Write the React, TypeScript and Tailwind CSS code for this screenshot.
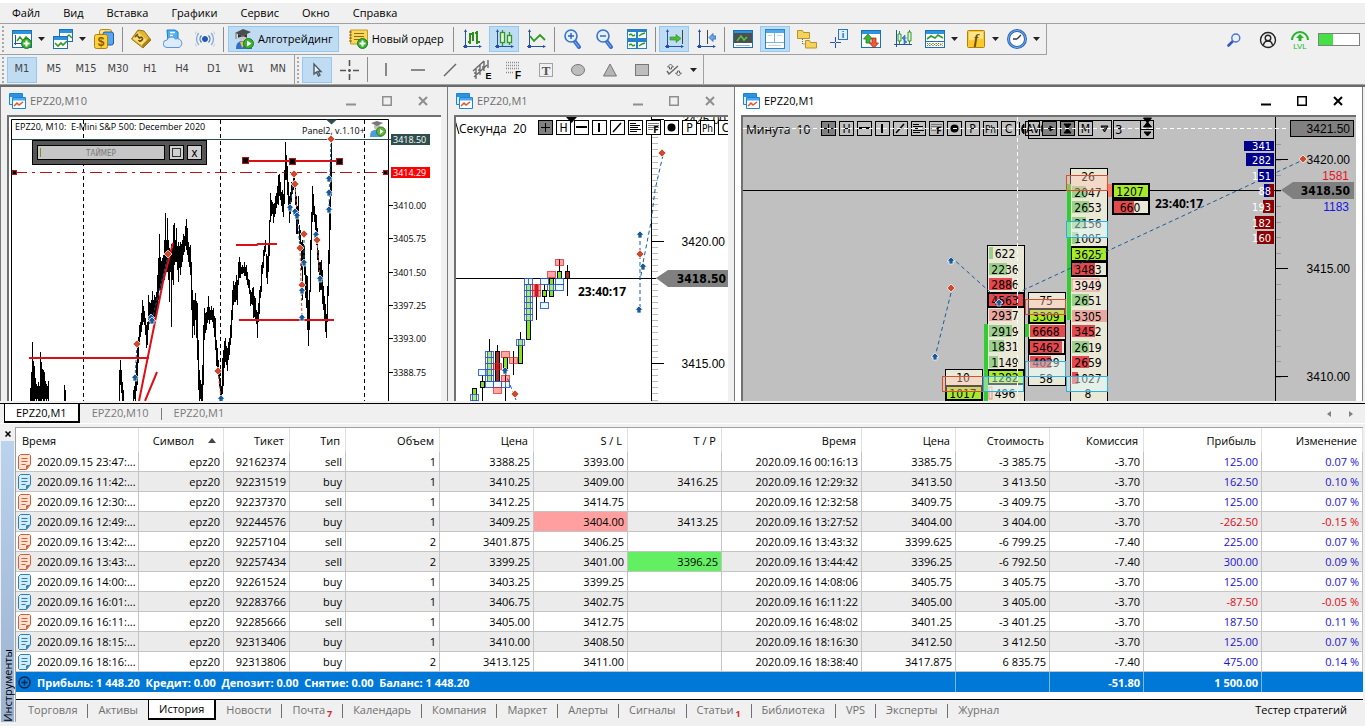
/**
 * @module App
 * Trading terminal workspace: menu, toolbars, three chart windows and the
 * toolbox with the account history table.
 */
import React from 'react';
import clsx from 'clsx';

const SANS = '"Open Sans", "Noto Sans", sans-serif';
const TAHOMA = '"DejaVu Sans Condensed", "DejaVu Sans", sans-serif';
const ARIAL = '"Liberation Sans", Arial, sans-serif';

/* ------------------------------------------------------------------ */
/* Toolbar icons                                                       */
/* ------------------------------------------------------------------ */

const AXES = (
  <g stroke="#2352a8" fill="#2352a8">
    <path d="M3.5 1v17M1 17.5h18" fill="none" />
    <path d="M3.5 0l1.5 3h-3zM20 17.5l-3-1.5v3zM2 16h3v3h-3z" stroke="none" />
  </g>
);

const WINDOW = (
  <>
    <rect x="0.5" y="1.5" width="19" height="17" fill="#fff" stroke="#1c6fb5" />
    <rect x="1" y="2" width="18" height="3" fill="#2b93e0" />
  </>
);

const PLUS_BADGE = (
  <>
    <circle cx="14.5" cy="14.5" r="5" fill="#37b22c" stroke="#1f7d1c" />
    <path d="M14.5 11.5v6M11.5 14.5h6" stroke="#fff" strokeWidth="2" />
  </>
);

const LENS_HANDLE = (
  <>
    <path d="M11.5 12l4.5 6" stroke="#3c6fd0" strokeWidth="4" strokeLinecap="round" />
    <path d="M12 13l4 5" stroke="#8fb4f2" strokeWidth="1" />
    <circle cx="8" cy="7" r="6" fill="#e2f1fd" stroke="#3a76c8" strokeWidth="1.6" />
  </>
);

const ICONS: Record<string, React.ReactNode> = {
  newChart: (
    <>
      {WINDOW}
      <path d="M3.5 6v10M2 14.5h15" stroke="#2352a8" />
      <path d="M5 12l3-4 3 4 3-4 4 4" fill="none" stroke="#2e9a24" strokeWidth="1.6" />
      {PLUS_BADGE}
    </>
  ),
  charts: (
    <>
      <rect x="6.5" y="0.5" width="13" height="12" fill="#fff" stroke="#1c6fb5" />
      <rect x="7" y="1" width="12" height="3" fill="#2b93e0" />
      <path d="M13 9l3-3 3 3" fill="none" stroke="#2e9a24" strokeWidth="1.4" />
      <rect x="0.5" y="7.5" width="14" height="12" fill="#fff" stroke="#1c6fb5" />
      <rect x="1" y="8" width="13" height="3" fill="#2b93e0" />
      <path d="M2 14l3 3 3-3 2 2 4-4" fill="none" stroke="#2e9a24" strokeWidth="1.6" />
    </>
  ),
  symbols: (
    <>
      <rect x="5.5" y="0.5" width="12" height="14" rx="2" fill="#ffe27a" stroke="#b8860b" />
      <rect x="9" y="3" width="10.5" height="13" rx="2" fill="#5aa5ee" stroke="#1b5fae" />
      <rect x="0.5" y="5.5" width="13" height="14" rx="2" fill="#ffd23c" stroke="#b07f0c" />
      <text x="7" y="17" fontSize="12" fontWeight="700" textAnchor="middle" fill="#8a5b00" fontFamily={ARIAL}>$</text>
    </>
  ),
  market: (
    <>
      <path d="M0.5 10L7 1l6 1 7 9-8 8z" fill="#e3b733" stroke="#94710f" />
      <path d="M2 10l5-7 10 9-5 5z" fill="#f7dc7a" />
      <path d="M20 11l-8 8-1-3 7-7z" fill="#a8801a" />
      <path d="M7 5l-3 3M6.500 7l2 2c1.500-2 4 0 2.500 2s-3 1-3.500 0" fill="none" stroke="#6b4c06" strokeWidth="1.6" />
    </>
  ),
  cloud: (
    <>
      <path d="M4 1h8l3 2v10H5z" fill="#4fb2ef" stroke="#1c7cc4" />
      <path d="M7 3.5h5M7 6.5h3" stroke="#fff" strokeWidth="1.4" />
      <path d="M4 18.5a3.7 3.7 0 010-7.500a5 5 0 018.500-1a4.300 4.300 0 013.500 8.500z" fill="#dcebff" stroke="#5b93e0" />
    </>
  ),
  signal: (
    <g fill="none" stroke="#4a82cf">
      <circle cx="10" cy="10" r="2.500" fill="#1f56b8" stroke="#1f56b8" />
      <path d="M6.500 6.500a5 5 0 000 7M13.500 6.500a5 5 0 010 7" strokeWidth="1.400" />
      <path d="M3.800 4a9 9 0 000 12M16.200 4a9 9 0 010 12" stroke="#7ba7de" strokeWidth="1.300" />
      <path d="M1.500 2.500a12 12 0 000 15M18.500 2.500a12 12 0 010 15" stroke="#b1cbec" />
    </g>
  ),
  algo: (
    <>
      <path d="M2 20c0-7 3-8 8-8s8 1 8 8z" fill="#2f6fd0" />
      <path d="M6 13l2 6 4-6z" fill="#f1b63a" />
      <circle cx="9" cy="8.500" r="4" fill="#c9c9c9" />
      <path d="M1 4l8-4 8 3-8 4z" fill="#4d4d4d" />
      <path d="M4 5v4c3-2 7-2 9 0V5L9 7z" fill="#333" />
      <path d="M2 4v6" stroke="#777" />
      <circle cx="14.500" cy="14.500" r="5" fill="#37b22c" stroke="#1f7d1c" />
      <path d="M13 11.500v6l4.500-3z" fill="#fff" />
    </>
  ),
  order: (
    <>
      <path d="M2.500 1h17v14h-17z" fill="#f9d75c" stroke="#c49a1c" />
      <path d="M1 3h3M1 6h3M1 9h3M1 12h3" stroke="#7b5f11" />
      <path d="M6 4.500h10M6 7.500h10M6 10.500h6" stroke="#8a6a14" />
      {PLUS_BADGE}
    </>
  ),
  bars: (
    <>
      {AXES}
      <path d="M8 4v11M6 13h2M8 5h3M11 3v9M15 2v13M13 4h2M15 13h3" fill="none" stroke="#2e8f1e" strokeWidth="2" />
    </>
  ),
  candles: (
    <>
      {AXES}
      <g fill="#e7fbe0" stroke="#2e9a24" strokeWidth="1.300">
        <path d="M8.500 1v16M15.500 3v13" />
        <rect x="6.500" y="3.500" width="4" height="10" />
        <rect x="13.500" y="6.500" width="4" height="7" />
      </g>
    </>
  ),
  line: (
    <>
      {AXES}
      <path d="M4 7l4 5 6-6 5 5" fill="none" stroke="#2e9a24" strokeWidth="1.800" />
    </>
  ),
  zoomIn: (
    <>
      {LENS_HANDLE}
      <path d="M8 4v6M5 7h6" stroke="#2a62b8" strokeWidth="1.400" />
    </>
  ),
  zoomOut: (
    <>
      {LENS_HANDLE}
      <path d="M5 7h6" stroke="#2a62b8" strokeWidth="1.400" />
    </>
  ),
  tile: (
    <>
      <rect x="0" y="0" width="20" height="20" fill="#2a7fc9" />
      <path d="M1 3h8v6H1zM11 3h8v6h-8zM1 13h8v6H1zM11 13h8v6h-8z" fill="#f2fbff" />
      <path d="M2 6l2-1 2 2 2-1M12 7l3-2 3-1M2 16l2-1 2 2 2-1M12 17l3-2 3-1" fill="none" stroke="#2e9a24" strokeWidth="1.400" />
    </>
  ),
  autoScroll: (
    <>
      {AXES}
      <path d="M18.500 1v14" stroke="#444" />
      <path d="M6 8h6V5.500l5 4-5 4V11H6z" fill="#4cbb3d" stroke="#2b8a20" strokeWidth="0.600" />
    </>
  ),
  shift: (
    <>
      {AXES}
      <path d="M11.500 1v14" stroke="#444" />
      <path d="M20 7h-3V4.500L13 8.500l4 4V10h3z" fill="#6ba7ea" stroke="#2a66b8" strokeWidth="0.800" />
    </>
  ),
  marketWatch: (
    <>
      {WINDOW}
      <rect x="1" y="4" width="18" height="10" fill="#4b5052" />
      <path d="M4 12l4-5 3 4 3-3" fill="none" stroke="#57c63c" strokeWidth="1.600" />
      <path d="M3 16.500h14" stroke="#9fb4c4" />
    </>
  ),
  navigator: (
    <>
      <rect x="0.500" y="0.500" width="19" height="19" fill="#fff" stroke="#2b86d0" />
      <rect x="1" y="1" width="18" height="3" fill="#51a9ea" />
      <path d="M9.500 4v9M1 13.500h18" stroke="#7fb7e4" />
      <path d="M3 6.500h4M12 6.500h5M3 16.500h13" stroke="#c4d4e2" />
    </>
  ),
  folders: (
    <>
      <path d="M0.500 1.500h5l1 2h6v6h-12z" fill="#f4d35c" stroke="#b8922a" />
      <path d="M8.500 11.500h4l1 2h6v5.500h-11z" fill="#f4d35c" stroke="#b8922a" />
      <path d="M5.500 10v5h3" fill="none" stroke="#666" strokeDasharray="1 1" />
    </>
  ),
  dataWindow: (
    <>
      <rect x="9.500" y="0.500" width="9" height="10" fill="#dff0ff" stroke="#2b76c4" />
      <text x="14" y="9" fontSize="9" fontWeight="700" textAnchor="middle" fill="#1d5fae" fontFamily={ARIAL}>i</text>
      <path d="M1 13.500h12M6.500 8v11" stroke="#2352a8" strokeDasharray="5 1" />
    </>
  ),
  trade: (
    <>
      {WINDOW}
      <path d="M7 5l4.500 5H9v4H5v-4H2.500z" fill="#3fb533" stroke="#1f7d1c" strokeWidth="0.800" />
      <path d="M13 19l-4.500-5H11V9h4v5h2.500z" fill="#ef5b3a" stroke="#ad2e15" strokeWidth="0.800" />
    </>
  ),
  depth: (
    <>
      <path d="M3.500 1v17M1 15.500h18" stroke="#2352a8" />
      <path d="M6.500 2v13M16.500 1v14" stroke="#2e9a24" />
      <path d="M5 5h3v7H5zM15 3h3v9h-3z" fill="#dff8d6" stroke="#2e9a24" />
      <path d="M9 9l3-3v6zM14 9h-2M14 13l-3-2v4z" fill="#3a82dc" stroke="#2a66b8" strokeWidth="0.600" />
    </>
  ),
  indicators: (
    <>
      {WINDOW}
      <path d="M1 12.500h18" stroke="#1c6fb5" />
      <path d="M2 10l4-3 4 2 3-3 5 3" fill="none" stroke="#2e9a24" strokeWidth="1.600" />
      <path d="M2 17l3-3 3 3 3-3 3 3 4-3" fill="none" stroke="#d24a3a" strokeDasharray="2 1" />
      <path d="M2 14l3 3 3-3 3 3 3-3 4 3" fill="none" stroke="#2e9a24" strokeDasharray="2 1" />
    </>
  ),
  func: (
    <>
      <rect x="1.500" y="1.500" width="17" height="17" rx="1" fill="#fbc92e" stroke="#b0820c" />
      <path d="M3 3h14v7c-5-2-9 2-14 1z" fill="#ffe48a" />
      <text x="10" y="15" fontSize="14" fontStyle="italic" fontWeight="700" textAnchor="middle" fill="#6b4a00" fontFamily='"Liberation Serif", serif'>f</text>
    </>
  ),
  clock: (
    <>
      <circle cx="10" cy="10" r="8.500" fill="#fff" stroke="#2a66b8" strokeWidth="3" />
      <circle cx="10" cy="10" r="8.500" fill="none" stroke="#7cb0ee" />
      <path d="M10 10l4-4M10 10H6" stroke="#333" strokeWidth="1.300" />
    </>
  ),
  cursor: <path d="M7 4v10l2.500-2 2 4 1.500-1-2-3.500h3z" fill="#f2f2f2" stroke="#4a5a68" strokeWidth="1.400" />,
  crosshair: <path d="M10.500 0v6M10.500 14v6M1 10.500h6M14 10.500h6M10.500 9v3M9 10.500h3" stroke="#555" strokeWidth="1.600" />,
  vline: <path d="M10 3v13" stroke="#666" strokeWidth="1.500" />,
  hline: <path d="M3 10h14" stroke="#666" strokeWidth="1.500" />,
  trend: <path d="M4 16L16 4" stroke="#666" strokeWidth="1.500" />,
  channel: (
    <>
      <path d="M2 17L15 5M1 11L12 1M4 19V8M8 15V5M12 11V1M16 8V0M2 13h2M6 10h2M10 7h2" stroke="#6a6a6a" strokeWidth="1.400" />
      <text x="16.500" y="19" fontSize="9" fontWeight="700" textAnchor="middle" fontFamily={ARIAL}>E</text>
    </>
  ),
  fibo: (
    <>
      <path d="M2 2.500h14M2 5.500h14M2 8.500h14M2 12.500h8" stroke="#8a8a8a" strokeDasharray="1 1" strokeWidth="1.500" />
      <text x="14" y="19" fontSize="10" fontWeight="700" textAnchor="middle" fontFamily={ARIAL}>F</text>
    </>
  ),
  text: (
    <>
      <rect x="3.500" y="3.500" width="13" height="13" fill="none" stroke="#555" strokeDasharray="1 1" />
      <text x="10" y="15" fontSize="13" fontWeight="700" textAnchor="middle" fill="#555" fontFamily='"Liberation Serif", serif'>T</text>
    </>
  ),
  ellipse: <ellipse cx="10" cy="10" rx="6.500" ry="5.500" fill="#bdbdbd" stroke="#777" />,
  triangle: <path d="M10 4l6.500 12h-13z" fill="#b5b5b5" stroke="#777" />,
  rect: <rect x="3.500" y="4.500" width="13" height="11" fill="#bdbdbd" stroke="#777" />,
  arrows: (
    <g fill="none" stroke="#666">
      <path d="M5.500 9V7H3.500l3-3 3 3H7.500v2zM13.500 11v2h-2l3 3 3-3h-2v-2z" />
      <path d="M3 11l2 3 9-8" strokeWidth="1.400" />
    </g>
  ),
};

function Icon({ name }: { name: string }) {
  return (
    <svg className="block shrink-0" width="20" height="20" viewBox="0 0 20 20" aria-hidden="true">
      {ICONS[name]}
    </svg>
  );
}

function ToolButton({ name, label, active, menu }: { name: string; label: string; active?: boolean; menu?: boolean }) {
  return (
    <>
      <button
        type="button"
        aria-label={label}
        className={clsx(
          'mx-px flex h-[26px] w-[30px] shrink-0 items-center justify-center border',
          active ? 'border-[#90c8f6] bg-[#c0dcf3]' : 'border-transparent'
        )}
      >
        <Icon name={name} />
      </button>
      {menu && (
        <button type="button" aria-label={`${label}: меню`} className="flex h-[26px] w-[9px] shrink-0 items-center">
          <svg width="7" height="4" viewBox="0 0 7 4">
            <path d="M0 0h7L3.500 4z" fill="#222" />
          </svg>
        </button>
      )}
    </>
  );
}

const Separator = () => <span className="mx-0.5 h-[25px] w-px shrink-0 bg-[#8c8c8c]" />;
const Grip = () => <span className="mr-0.5 ml-0.5 h-[26px] w-0.5 shrink-0 border-l-2 border-dotted border-[#a8a8a8]" />;

function TopToolbar() {
  return (
    <div className="flex h-[31px] shrink-0 items-center">
      <div className="flex h-[31px] items-center border-r border-b border-[#a0a0a0] pr-1">
        <Grip />
        <ToolButton name="newChart" label="Новый график" menu />
        <ToolButton name="charts" label="Профили" menu />
        <ToolButton name="symbols" label="Символы" />
        <Separator />
        <ToolButton name="market" label="Маркет" />
        <ToolButton name="cloud" label="VPS" />
        <ToolButton name="signal" label="Сигналы" />
        <Separator />
        <button type="button" className="mx-0.5 flex h-[26px] items-center gap-1 border border-[#90c8f6] bg-[#c0dcf3] px-[5px] text-[11px]">
          <Icon name="algo" />
          Алготрейдинг
        </button>
        <button type="button" className="mx-0.5 flex h-[26px] items-center gap-1 px-[5px] text-[11px]">
          <Icon name="order" />
          Новый ордер
        </button>
        <Separator />
        <ToolButton name="bars" label="Бары" />
        <ToolButton name="candles" label="Свечи" active />
        <ToolButton name="line" label="Линия" />
        <Separator />
        <ToolButton name="zoomIn" label="Увеличить" />
        <ToolButton name="zoomOut" label="Уменьшить" />
        <ToolButton name="tile" label="Плитка" />
        <Separator />
        <ToolButton name="autoScroll" label="Автопрокрутка" active />
        <ToolButton name="shift" label="Сдвиг графика" />
        <Separator />
        <ToolButton name="marketWatch" label="Обзор рынка" />
        <ToolButton name="navigator" label="Инструменты" active />
        <ToolButton name="folders" label="Навигатор" />
        <ToolButton name="dataWindow" label="Окно данных" />
        <ToolButton name="trade" label="Торговля" />
        <ToolButton name="depth" label="Стакан цен" />
        <ToolButton name="indicators" label="Индикаторы" menu />
        <ToolButton name="func" label="Функции" menu />
        <ToolButton name="clock" label="Периоды" menu />
      </div>
      <div className="ml-auto flex items-center pr-[5px]">
        <button type="button" aria-label="Поиск" className="flex w-[34px] justify-center">
          <svg width="14" height="14" viewBox="0 0 14 14">
            <path d="M1.500 12.500L6 8" stroke="#3557c0" strokeWidth="2.600" strokeLinecap="round" />
            <circle cx="8.800" cy="5" r="4" fill="#e6f0ff" stroke="#4a72d8" strokeWidth="1.400" />
          </svg>
        </button>
        <button type="button" aria-label="Профиль" className="flex w-[34px] justify-center">
          <svg width="18" height="18" viewBox="0 0 18 18" fill="none" stroke="#222" strokeWidth="1.400">
            <circle cx="9" cy="9" r="7.500" />
            <circle cx="9" cy="7" r="2.800" />
            <path d="M4.500 14c.5-3 2-4 4.500-4s4 1 4.500 4" />
          </svg>
        </button>
        <button type="button" aria-label="Уровень" className="flex w-[30px] justify-center">
          <svg width="20" height="20" viewBox="0 0 20 20">
            <path d="M2 10a8 8 0 0116 0" fill="none" stroke="#23b52a" strokeWidth="2" />
            <path d="M10 4l4 4h-2.500v3h-3V8H6z" fill="#23b52a" />
            <text x="10" y="19" fontSize="8" textAnchor="middle" fill="#23b52a" fontFamily={ARIAL}>LVL</text>
          </svg>
        </button>
        <div className="ml-[3px] h-[13px] w-[42px] border border-[#808080] bg-white">
          <div className="h-full w-[14px] bg-[#43e143]" />
        </div>
      </div>
    </div>
  );
}

const TIMEFRAMES = ['M1', 'M5', 'M15', 'M30', 'H1', 'H4', 'D1', 'W1', 'MN'];

function ObjectsToolbar() {
  return (
    <div className="flex h-[30px] shrink-0 items-center border-b border-[#a0a0a0]">
      <Grip />
      {TIMEFRAMES.map((tf, i) => (
        <button
          key={tf}
          type="button"
          className={clsx(
            'mx-px h-[26px] w-[30px] border text-[11px] text-[#444]',
            i === 0 ? 'border-[#90c8f6] bg-[#c0dcf3]' : 'border-transparent'
          )}
          style={{ fontFamily: TAHOMA }}
        >
          {tf}
        </button>
      ))}
      <span className="h-[30px] w-px bg-[#a0a0a0]" />
      <Grip />
      <ToolButton name="cursor" label="Курсор" active />
      <ToolButton name="crosshair" label="Перекрестие" />
      <Separator />
      <ToolButton name="vline" label="Вертикальная линия" />
      <ToolButton name="hline" label="Горизонтальная линия" />
      <ToolButton name="trend" label="Трендовая линия" />
      <ToolButton name="channel" label="Канал" />
      <ToolButton name="fibo" label="Фибоначчи" />
      <ToolButton name="text" label="Текст" />
      <ToolButton name="ellipse" label="Эллипс" />
      <ToolButton name="triangle" label="Треугольник" />
      <ToolButton name="rect" label="Прямоугольник" />
      <ToolButton name="arrows" label="Стрелки" menu />
      <span className="ml-1 h-[30px] w-px bg-[#a0a0a0]" />
    </div>
  );
}

/* ------------------------------------------------------------------ */
/* Chart windows                                                       */
/* ------------------------------------------------------------------ */

interface ChartWindowProps {
  title: string;
  active?: boolean;
  className?: string;
  chartClass: string;
  origin: number;
  children: React.ReactNode;
}

/** Window frame. Chart children are drawn in workspace coordinates shifted by `origin`. */
function ChartWindow({ title, active, className, chartClass, origin, children }: ChartWindowProps) {
  return (
    <section
      className={clsx('flex min-w-0 flex-col border-r border-[#7a7a7a] pr-[6px] pl-[6px]', active ? 'bg-white' : 'bg-[#f0f0f0]', className)}
    >
      <header className="flex h-[28px] shrink-0 items-center gap-1">
        <svg width="17" height="16" viewBox="0 0 17 16" className="ml-0.5">
          <path d="M0.500 0.500h13v11h-13z" fill="#d9efff" stroke="#1d83d4" />
          <path d="M1 1h12v3H1z" fill="#2b93e0" />
          <path d="M3.500 4.500h13v11h-13z" fill="#fff" stroke="#1d83d4" />
          <path d="M4 5h12v2.500H4z" fill="#4aa9ee" />
          <path d="M5 13l3-3 2 2 4-3" fill="none" stroke="#e2552a" strokeWidth="1.500" />
        </svg>
        <h2 className={clsx('flex-1 text-[11px]', active ? 'text-black' : 'text-[#6e6e6e]')}>{title}</h2>
        <div className={clsx('flex', active ? 'text-black' : 'text-[#8f8f8f]')}>
          <button type="button" aria-label="Свернуть" className="flex h-6 w-9 items-center justify-center">
            <svg width="10" height="10"><path d="M0 8.500h10" stroke="currentColor" strokeWidth="2" /></svg>
          </button>
          <button type="button" aria-label="Развернуть" className="flex h-6 w-9 items-center justify-center">
            <svg width="10" height="10"><rect x="0.750" y="0.750" width="8.500" height="8.500" fill="none" stroke="currentColor" strokeWidth="1.500" /></svg>
          </button>
          <button type="button" aria-label="Закрыть" className="flex h-6 w-9 items-center justify-center">
            <svg width="10" height="10"><path d="M1 1l8 8M9 1l-8 8" stroke="currentColor" strokeWidth="2" /></svg>
          </button>
        </div>
      </header>
      <div className={clsx('min-h-0 flex-1 overflow-hidden border-t-2 border-l-2 border-[#707070]', chartClass)}>
        <svg className="block h-full w-full">
          <g transform={`translate(${-origin} -117)`}>{children}</g>
        </svg>
      </div>
    </section>
  );
}

function Mark({ x, y, sell }: { x: number; y: number; sell?: boolean }) {
  return sell ? (
    <path transform={`translate(${x} ${y})`} d="M0-4l4 4-4 4-4-4z" fill="#cf4a2c" stroke="#fff" strokeWidth="0.700" />
  ) : (
    <path transform={`translate(${x} ${y})`} d="M0-4l4 4H2v3h-4v-3h-2z" fill="#145a9c" stroke="#fff" strokeWidth="0.700" />
  );
}

// [x, high, low] of the M10 series, one bar per column
const M10_RANGES: number[][][] = [
  [[30, 388, 401], [31, 372, 401], [32, 342, 401], [33, 361, 401], [34, 366, 401], [36, 384, 401], [38, 382, 401], [39, 386, 401], [40, 352, 401], [41, 362, 401], [43, 370, 401], [44, 372, 401], [46, 384, 401], [48, 381, 401]],
  [[64, 385, 401], [65, 390, 401]],
  [[119, 370, 401], [120, 360, 385], [121, 370, 393], [122, 382, 401], [123, 390, 401]],
  [[133, 390, 401], [135, 375, 401], [137, 343, 385], [139, 325, 345], [141, 313, 332], [142, 300, 325], [143, 306, 322], [144, 311, 325], [145, 318, 335], [146, 325, 348], [147, 322, 345], [148, 295, 330], [150, 303, 322], [152, 291, 318], [153, 300, 318], [154, 295, 320], [156, 292, 315], [157, 275, 310], [158, 258, 300], [159, 234, 290], [160, 257, 290], [162, 258, 285], [163, 255, 282], [164, 240, 280], [165, 213, 270], [166, 240, 272], [167, 218, 272], [168, 240, 280], [169, 248, 302], [170, 250, 272], [171, 244, 327], [172, 248, 280], [173, 225, 285], [174, 223, 265], [175, 240, 262], [176, 228, 262], [177, 246, 270], [178, 242, 282], [179, 246, 268], [180, 242, 275], [182, 240, 262], [183, 234, 255], [184, 236, 252], [185, 226, 246], [186, 219, 250], [187, 228, 255], [188, 242, 262], [190, 245, 275], [191, 262, 310], [192, 290, 338], [193, 300, 326], [194, 300, 335], [195, 293, 320], [197, 303, 360], [198, 340, 390], [199, 370, 401], [201, 384, 401], [202, 365, 401], [203, 325, 385], [204, 308, 340], [206, 312, 330], [208, 296, 320], [209, 307, 324], [211, 306, 320], [213, 308, 328], [215, 318, 350], [216, 340, 366], [217, 348, 372], [218, 360, 378], [220, 378, 399], [221, 386, 401], [222, 358, 394], [223, 350, 386], [224, 341, 368], [225, 338, 362], [227, 348, 371], [228, 342, 360], [229, 338, 355], [230, 325, 345], [231, 310, 338], [232, 290, 320], [233, 281, 305], [235, 282, 302], [236, 275, 300], [237, 280, 305], [238, 262, 285], [239, 257, 278], [240, 262, 278], [242, 265, 274], [244, 262, 276], [246, 265, 280], [247, 272, 285], [249, 280, 294], [250, 290, 306], [252, 288, 305], [253, 287, 318], [255, 298, 320], [256, 310, 324], [257, 312, 338], [258, 303, 322], [259, 290, 314], [260, 286, 298], [261, 265, 292], [262, 262, 274], [263, 250, 268], [264, 246, 256], [265, 240, 252], [266, 254, 278], [267, 256, 284], [268, 245, 272], [269, 220, 256], [270, 193, 222], [271, 200, 216], [272, 202, 214], [273, 204, 223], [275, 196, 214], [276, 193, 208], [277, 186, 204], [278, 175, 205], [279, 174, 196], [280, 182, 200], [281, 192, 206], [282, 190, 212], [283, 194, 217], [284, 170, 204], [285, 142, 180], [286, 155, 180], [287, 166, 195], [288, 182, 210], [289, 196, 223], [290, 192, 214], [291, 182, 202], [293, 178, 190], [294, 178, 188], [295, 186, 205], [296, 196, 234], [297, 206, 234], [298, 196, 224], [299, 225, 240], [300, 230, 250], [301, 242, 270], [302, 240, 300], [303, 244, 262], [304, 246, 275], [305, 262, 298], [306, 275, 308], [307, 276, 330], [308, 300, 346], [309, 290, 330], [310, 240, 292], [311, 212, 250], [312, 186, 222], [313, 194, 215], [314, 206, 222], [315, 214, 230], [316, 215, 245], [317, 228, 260], [318, 250, 272], [319, 262, 292], [320, 262, 290], [321, 260, 290], [322, 270, 304], [323, 286, 310], [324, 296, 320], [325, 304, 332], [326, 314, 338], [327, 286, 322], [328, 250, 296], [329, 200, 264], [330, 160, 230], [331, 141, 196]],
];

// Interpolates gaps between known columns so every pixel column has a bar.
const m10Path = M10_RANGES.map(range =>
  range
    .map(([x, hi, lo], i) => {
      const next = range[i + 1];
      let d = `M${x + 0.5} ${hi}V${lo}`;
      if (next && next[0] - x > 1) {
        d += `M${x + 1.5} ${Math.round((hi + next[1]) / 2) + 3}V${Math.round((lo + next[2]) / 2) - 2}`;
      }
      return d;
    })
    .join('')
).join('');

const M10_LABELS: [string, number][] = [
  ['3410.00', 205], ['3405.75', 238], ['3401.50', 272], ['3397.25', 305], ['3393.00', 338], ['3388.75', 372],
];

const M10_MARKS: [number, number, boolean][] = [
  [168, 254, true], [151, 318, false], [152, 321, false], [137, 344, true], [135, 378, false], [218, 371, true], [221, 399, false],
  [331, 139, true], [294, 174, true], [295, 184, true], [290, 208, false], [295, 212, false], [297, 216, false],
  [304, 234, true], [300, 248, true], [304, 263, false], [302, 285, true], [302, 291, false], [302, 318, false],
  [316, 235, false], [317, 240, true], [320, 279, false], [329, 179, false], [329, 193, false], [329, 210, false],
];

function ChartM10() {
  return (
    <g>
      <path d="M11.500 401V119.500H388.500V401" fill="none" stroke="#000" />
      <path d="M12 139.500H394" stroke="#2f4f4f" />
      <path d="M83.500 120V401M220.500 120V401M364.500 120V401" stroke="#000" strokeDasharray="4 3" />
      <path d={m10Path} stroke="#000" strokeWidth="1" shapeRendering="crispEdges" />
      <path d="M15 172.500H386" stroke="#b5121b" strokeDasharray="12 5 3 5" />
      <g stroke="#dd0f14" strokeWidth="2" fill="none">
        <path d="M29 358H149M139 401L163 282 173 243M145 401L157 372M245 161H340M236 245H257L258 244H277M239 320H334" />
      </g>
      <g fill="#000" stroke="#b5121b">
        <rect x="12.500" y="170.500" width="4" height="4" />
        <rect x="383.500" y="170.500" width="4" height="4" />
        <rect x="242.500" y="157.500" width="6" height="6" />
        <rect x="289.500" y="158.500" width="6" height="6" />
        <rect x="336.500" y="158.500" width="6" height="6" />
      </g>
      <path d="M135 378L137 344M152 320L168 256M290 208L294 176M297 216L300 248M304 263L304 236M331 139L329 210" stroke="#145a9c" strokeDasharray="3 2" />
      <path d="M218 371L221 399M295 184L297 214M300 248L302 318M317 240L320 279" stroke="#cf4a2c" strokeDasharray="3 2" />
      {M10_MARKS.map(([x, y, sell], i) => <Mark key={i} x={x} y={y} sell={sell} />)}
      <path d="M326 119.500h11l-5.500 5z" fill="#2f4f4f" />

      <g fontFamily={SANS} fontSize="9">
        <text x="15" y="130" xmlSpace="preserve">EPZ20, M10:  E-Mini S&amp;P 500: December 2020</text>
        <text x="302" y="134">Panel2, v.1.10+</text>
        {M10_LABELS.map(([t, y]) => (
          <g key={t}>
            <path d={`M389 ${y + 0.5}h4`} stroke="#000" />
            <text x="393" y={y + 4}>{t}</text>
          </g>
        ))}
        <rect x="391" y="134" width="39" height="11" fill="#2f4f4f" />
        <text x="393" y="143" fill="#fff">3418.50</text>
        <rect x="391" y="167" width="39" height="11" fill="#f00" />
        <text x="393" y="176" fill="#fff">3414.29</text>
      </g>

      {/* Expert avatar */}
      <path d="M370 137c0-6 2-7 6-7s6 1 6 7z" fill="#4f9bd8" />
      <circle cx="377" cy="127" r="3" fill="#bdbdbd" />
      <path d="M371 123l6-2 6 2-6 3z" fill="#777" />
      <circle cx="381" cy="131.500" r="4.500" fill="#63b63e" stroke="#2e7d1c" />
      <path d="M380 129v5l3.500-2.500z" fill="#fff" />

      {/* Timer panel */}
      <rect x="32.500" y="140.500" width="174" height="24" fill="#555" stroke="#000" />
      <rect x="37.500" y="145.500" width="127" height="14" fill="#c6c6c6" stroke="#000" />
      <path d="M40.500 148v9" stroke="#8a8a20" />
      <text x="101" y="156" fontSize="8" textAnchor="middle" fill="#777" fontFamily={TAHOMA}>ТАЙМЕР</text>
      <rect x="169.500" y="145.500" width="14" height="14" fill="#d0d0d0" stroke="#000" />
      <rect x="172.500" y="148.500" width="8" height="8" fill="none" stroke="#333" />
      <rect x="187.500" y="145.500" width="14" height="14" fill="#d0d0d0" stroke="#000" />
      <text x="194.500" y="157" fontSize="12" textAnchor="middle" fontFamily={TAHOMA}>x</text>
    </g>
  );
}

const PANEL_TOOLS = ['cross', 'H', 'h', 'v', 'd', 'list', 'F', 'dot', 'P', 'Ph', 'C'];

/** Row of small square tools drawn by the chart indicator. */
function PanelTools({ x, y, fill }: { x: number; y: number; fill: string }) {
  return (
    <g fontFamily={TAHOMA} fontSize="12" textAnchor="middle">
      {PANEL_TOOLS.map((tool, i) => (
        <g key={tool} transform={`translate(${x + i * 18} ${y})`}>
          <rect x="0.500" y="0.500" width="14" height="14" fill={i === 0 ? '#808080' : fill} stroke="#000" />
          {tool === 'cross' && <path d="M7.500 3v9M3 7.500h9" stroke="#000" />}
          {tool === 'h' && <path d="M2 7h11" stroke="#000" strokeWidth="2" />}
          {tool === 'v' && <path d="M7 3v9" stroke="#000" strokeWidth="2" />}
          {tool === 'd' && <path d="M3 12l8-9" stroke="#000" strokeWidth="1.500" />}
          {tool === 'list' && <path d="M2 3.500h6M2 5.500h10M2 7.500h8M2 9.500h11M2 11.500h7" stroke="#000" />}
          {tool === 'F' && <path d="M2 3.500h11M2 5.500h11M2 7.500h11M2 9.500h5" stroke="#777" />}
          {tool === 'F' && <text x="10" y="13" fontSize="9" fontWeight="700">F</text>}
          {tool === 'dot' && <circle cx="7.500" cy="7.500" r="4" />}
          {['H', 'P', 'Ph', 'C'].includes(tool) && <text x="7.500" y="12" fontSize={tool === 'Ph' ? 10 : 12}>{tool}</text>}
        </g>
      ))}
    </g>
  );
}

// Wicks, bodies and highlighted price cells of the seconds chart.
const WICKS = 'M482.500 375V401M489.500 339V351M497.500 345V351M505.500 363V401M513.500 351V375M520.500 332V339M528.500 278V284M536.500 284V320M544.500 284V302M559.500 259V271M567.500 265V296';
const GREEN_BODIES = [[474, 388, 13], [482, 381, 6], [489, 351, 30], [505, 357, 11], [520, 339, 24], [528, 284, 55], [544, 290, 6], [551, 278, 18], [559, 271, 7]];
const RED_BODIES = [[497, 351, 30], [567, 271, 7]];
const BLUE_CELLS = [
  [474, 394], [482, 369], [489, 351], [489, 357], [489, 363], [489, 369], [489, 375], [489, 381], [497, 381], [505, 381],
  [520, 339], [528, 278], [528, 284], [528, 290], [528, 296], [528, 302], [528, 308], [528, 314], [544, 278], [544, 302],
  [551, 284], [559, 278], [559, 284],
];
const RED_CELLS = [[497, 363], [505, 351], [505, 375], [497, 387], [513, 357], [551, 271], [559, 259], [536, 284], [536, 290]];

function PriceTag({ x, y, right }: { x: number; y: number; right: number }) {
  return (
    <>
      <path d={`M${x} ${y}l12-8H${right}v17H${x + 12}z`} fill="#808080" />
      <text x={right - 4} y={y + 5} textAnchor="end" fontFamily={TAHOMA} fontSize="12" fontWeight="700">3418.50</text>
    </>
  );
}

function ChartSeconds() {
  return (
    <g>
      <path d={Array.from({ length: 46 }, (_, i) => `M652 ${Math.round(125 + i * 6.1) + 0.5}h6`).join('')} stroke="#bbb" />
      <path d="M651.500 117V401M652 119.500h12M652 241.500h12M652 363.500h12" stroke="#000" />
      <text x="726" y="124" textAnchor="end" fontFamily={ARIAL} fontSize="12">3425.00</text>
      <path d="M455 278.500H656" stroke="#000" />
      <path d={WICKS} stroke="#000" />
      {GREEN_BODIES.map(([x, y, h]) => <rect key={`${x}-${y}`} x={x - 1.5} y={y + 0.5} width="4" height={h} fill="#7fe51f" stroke="#000" />)}
      {RED_BODIES.map(([x, y, h]) => <rect key={`${x}-${y}`} x={x - 1.5} y={y + 0.5} width="4" height={h} fill="#a52a2a" stroke="#000" />)}
      {BLUE_CELLS.map(([x, y]) => (
        <rect key={`${x}-${y}`} x={x - 3.5} y={y + 0.5} width="8" height="6" fill="#c9f4ff" fillOpacity="0.450" stroke="#2a50d8" strokeOpacity="0.850" />
      ))}
      {RED_CELLS.map(([x, y]) => (
        <rect key={`${x}-${y}`} x={x - 3.5} y={y + 0.5} width="8" height="6" fill="#f00" fillOpacity="0.350" stroke="#e02020" strokeOpacity="0.700" />
      ))}
      <rect x="534.500" y="284.500" width="4" height="12" fill="#d01824" />
      <path d="M663 155L655 190 651 222 642 268M640 234V308M643 265L640 280M505 372L516 400" stroke="#145a9c" fill="none" strokeDasharray="4 3" />
      <Mark x={662} y={153} sell />
      <Mark x={640} y={235} />
      <Mark x={640} y={254} sell />
      <Mark x={643} y={267} />
      <Mark x={639} y={310} />
      <Mark x={505} y={371} />
      <Mark x={515} y={394} sell />
      <PanelTools x={538} y={120} fill="#fff" />
      <path d="M566 117h11l-5.500 6z" />
      <path d="M455 120l4 14" stroke="#000" />
      <text x="459" y="133" fontFamily={SANS} fontSize="12" xmlSpace="preserve">Секунда  20</text>
      <text x="578" y="296" fontFamily={SANS} fontSize="12" fontWeight="700">23:40:17</text>
      <g fontFamily={ARIAL} fontSize="12">
        <text x="725" y="246" textAnchor="end">3420.00</text>
        <text x="725" y="368" textAnchor="end">3415.00</text>
      </g>
      <PriceTag x={656} y={278} right={730} />
    </g>
  );
}

interface Cell {
  v: string;
  w: number; // volume bar width
  tone: 'green' | 'red' | 'pink' | 'lime' | 'open';
  box?: boolean;
}

const TONES = { green: '#9ccf8e', red: '#e5484d', pink: '#e9a9a0', lime: '#a6ea2a', open: '#f6e3d8' };

const c = (v: string, w: number, tone: Cell['tone'], box?: boolean): Cell => ({ v, w, tone, box });

const CLUSTERS: { x: number; y: number; cells: Cell[] }[] = [
  { x: 945, y: 369, cells: [c('10', 0, 'open'), c('1017', 38, 'lime', true), c('', 0, 'open')] },
  {
    x: 987, y: 245,
    cells: [
      c('622', 4, 'green'), c('2236', 18, 'green'), c('2886', 23, 'red'), c('4563', 36, 'red', true), c('2937', 23, 'pink'),
      c('2919', 23, 'green'), c('1831', 15, 'green'), c('1149', 9, 'green'), c('1282', 36, 'lime', true), c('496', 3, 'open'), c('', 0, 'open'),
    ],
  },
  {
    x: 1028, y: 292,
    cells: [c('75', 0, 'open'), c('3309', 38, 'lime', true), c('6668', 38, 'red'), c('5462', 32, 'red', true), c('4029', 21, 'red'), c('58', 0, 'open')],
  },
  {
    x: 1070, y: 168,
    cells: [
      c('26', 0, 'open'), c('2047', 14, 'green'), c('2653', 17, 'green'), c('2156', 14, 'green'), c('1005', 6, 'green'),
      c('3625', 36, 'lime', true), c('3483', 23, 'red', true), c('3949', 27, 'open'), c('2651', 17, 'green'), c('5305', 36, 'pink'),
      c('3452', 23, 'red'), c('2619', 17, 'green'), c('2659', 17, 'red'), c('1027', 6, 'red'), c('8', 0, 'open'),
    ],
  },
  { x: 1112, y: 183, cells: [c('1207', 36, 'lime', true), c('660', 20, 'red', true)] },
];

const ROW = 15.5;

const PROFILE: [string, number, number, string][] = [
  ['341', 141, 30, '#00008b'], ['282', 153, 28, '#00008b'], ['151', 169, 16, '#00008b'], ['88', 184, 10, '#00008b'],
  ['193', 200, 11, '#8b0000'], ['182', 216, 19, '#8b0000'], ['160', 231, 17, '#8b0000'],
];

function Cluster({ x, y, cells }: { x: number; y: number; cells: Cell[] }) {
  return (
    <g>
      <rect x={x + 0.5} y={y + 0.5} width="37" height={Math.round(cells.length * ROW)} fill="#eae8d6" stroke="#000" />
      {cells.map((cell, i) => {
        const top = Math.round(y + i * ROW) + 1;
        return (
          <g key={i}>
            {cell.w > 0 && <rect x={x + 2} y={top + 1} width={Math.min(cell.w, 35)} height="12" fill={TONES[cell.tone]} stroke={cell.tone === 'open' ? '#e28f86' : 'none'} />}
            {cell.box && <rect x={x + 1} y={top} width="36" height="14" fill="none" stroke="#000" strokeWidth="2" />}
            <text x={x + 18} y={top + 12} textAnchor="middle">{cell.v}</text>
          </g>
        );
      })}
    </g>
  );
}

function ChartClusters() {
  return (
    <g>
      <path d="M743 190.500H1281" stroke="#000" />
      <path d="M1275.500 117V401" stroke="#000" />
      <path d={Array.from({ length: 16 }, (_, i) => `M1276 ${Math.round(144 + i * ROW) + 0.5}h5`).join('')} stroke="#999" />
      <path d="M1276 159.500h12M1276 268.500h12M1276 376.500h12" stroke="#000" />

      <rect x="1108" y="184" width="5" height="13" fill="#f77a6a" />
      <g fontFamily={TAHOMA} fontSize="12">
        {CLUSTERS.map(cl => <Cluster key={cl.x} {...cl} />)}
      </g>
      <g fill="#33cc33">
        <rect x="984" y="324" width="4" height="77" />
        <rect x="1025" y="324" width="4" height="13" />
        <rect x="1067" y="184" width="4" height="136" />
      </g>

      {/* Imbalance zones */}
      <g fill="#ffc4b4" fillOpacity="0.400" stroke="#d8502a" strokeWidth="1">
        <rect x="942.500" y="376.500" width="41" height="15" />
        <rect x="1025.500" y="299.500" width="40" height="15" />
        <rect x="1066.500" y="175.500" width="41" height="15" />
      </g>
      <g fill="#dffaff" fillOpacity="0.450" stroke="#29b0e0" strokeWidth="1">
        <rect x="983.500" y="376.500" width="40" height="15" />
        <rect x="1025.500" y="361.500" width="40" height="15" />
        <rect x="1066.500" y="221.500" width="41" height="16" />
        <rect x="1066.500" y="376.500" width="41" height="15" />
      </g>

      <path d="M951 257L1000 301L1303 160M951 293L935 357" fill="none" stroke="#1f5c99" strokeDasharray="4 3" />
      <Mark x={951} y={261} />
      <Mark x={951} y={288} sell />
      <Mark x={935} y={357} />
      <Mark x={999} y={303} />

      <g fontFamily={TAHOMA} fontSize="11" fill="#fff" textAnchor="end">
        {PROFILE.map(([v, y, w, fill]) => (
          <g key={v}>
            <rect x={1274 - w} y={y} width={w} height={y === 141 ? 10 : 13} fill={fill} />
            {v === '88' && <rect x="1269" y={y} width="5" height="13" fill="#8b0000" />}
            <text x="1271" y={y + (y === 141 ? 9 : 11)}>{v}</text>
          </g>
        ))}
      </g>

      <text x="1155" y="208" fontFamily={SANS} fontSize="12" fontWeight="700">23:40:17</text>
      <text x="746" y="134" fontFamily={SANS} fontSize="12" xmlSpace="preserve">Минута  10</text>
      <PanelTools x={821} y={121} fill="#c0c0c0" />

      {/* Mode selector */}
      <g fontFamily={TAHOMA} fontSize="12" fill="none" stroke="#000">
        <path d="M1019.500 122v13M1024 124c-3 2-3 8 0 10z" fill="#000" />
        <rect x="1028.500" y="120.500" width="83" height="18" />
        <rect x="1025.500" y="121.500" width="14" height="14" />
        <text x="1026" y="133" stroke="none" fill="#000">AVG</text>
        <rect x="1042.500" y="121.500" width="14" height="14" fill="#808080" />
        <path d="M1045 128.500h7" />
        <path d="M1050 126l4 2.500-4 2.500z" fill="#000" />
        <rect x="1060.500" y="121.500" width="14" height="14" fill="#808080" />
        <path d="M1064 124h7l-3.500 4.500zM1064 133h7l-3.500-4.500z" fill="#000" />
        <rect x="1078.500" y="121.500" width="14" height="14" />
        <text x="1085.500" y="133" stroke="none" fill="#000" textAnchor="middle">M</text>
        <path d="M1101 126h7l-3.500 6z" fill="#555" />
        <rect x="1113.500" y="120.500" width="40" height="18" />
        <text x="1115" y="134" fontSize="13" stroke="none" fill="#000">3</text>
        <path d="M1140.500 120v19M1141 129.500h13" />
        <path d="M1143.500 127h8l-4-5zM1143.500 118h8l-4 5zM1144 132h7l-3.500 4z" fill="#000" />
      </g>
      <path d="M743 128.500H1288M1017.500 117V401" stroke="#fff" strokeDasharray="4 3" />

      <rect x="1290.500" y="120.500" width="63" height="16" fill="#808080" stroke="#000" />
      <g fontFamily={ARIAL} fontSize="12" textAnchor="end">
        <text x="1350" y="133">3421.50</text>
        <text x="1350" y="164">3420.00</text>
        <text x="1350" y="273">3415.00</text>
        <text x="1350" y="381">3410.00</text>
        <text x="1349" y="180" fill="#e8141c">1581</text>
        <text x="1349" y="211" fill="#1414e0">1183</text>
      </g>
      <Mark x={1303} y={159} sell />
      <PriceTag x={1281} y={190} right={1354} />
    </g>
  );
}

/* ------------------------------------------------------------------ */
/* Toolbox                                                             */
/* ------------------------------------------------------------------ */

const COLUMNS: [string, number][] = [
  ['Время', 123], ['Символ', 85], ['Тикет', 66], ['Тип', 56], ['Объем', 94], ['Цена', 94], ['S / L', 94], ['T / P', 94],
  ['Время', 140], ['Цена', 94], ['Стоимость', 94], ['Комиссия', 94], ['Прибыль', 118], ['Изменение', 101],
];

const DEALS: string[][] = [
  ['2020.09.15 23:47:...', 'epz20', '92162374', 'sell', '1', '3388.25', '3393.00', '', '2020.09.16 00:16:13', '3385.75', '-3 385.75', '-3.70', '125.00', '0.07 %'],
  ['2020.09.16 11:42:...', 'epz20', '92231519', 'buy', '1', '3410.25', '3409.00', '3416.25', '2020.09.16 12:29:32', '3413.50', '3 413.50', '-3.70', '162.50', '0.10 %'],
  ['2020.09.16 12:30:...', 'epz20', '92237370', 'sell', '1', '3412.25', '3414.75', '', '2020.09.16 12:32:58', '3409.75', '-3 409.75', '-3.70', '125.00', '0.07 %'],
  ['2020.09.16 12:49:...', 'epz20', '92244576', 'buy', '1', '3409.25', '3404.00', '3413.25', '2020.09.16 13:27:52', '3404.00', '3 404.00', '-3.70', '-262.50', '-0.15 %'],
  ['2020.09.16 13:42:...', 'epz20', '92257104', 'sell', '2', '3401.875', '3406.25', '', '2020.09.16 13:43:32', '3399.625', '-6 799.25', '-7.40', '225.00', '0.07 %'],
  ['2020.09.16 13:43:...', 'epz20', '92257434', 'sell', '2', '3399.25', '3401.00', '3396.25', '2020.09.16 13:44:42', '3396.25', '-6 792.50', '-7.40', '300.00', '0.09 %'],
  ['2020.09.16 14:00:...', 'epz20', '92261524', 'buy', '1', '3403.25', '3399.25', '', '2020.09.16 14:08:06', '3405.75', '3 405.75', '-3.70', '125.00', '0.07 %'],
  ['2020.09.16 16:01:...', 'epz20', '92283766', 'buy', '1', '3406.75', '3402.75', '', '2020.09.16 16:11:22', '3405.00', '3 405.00', '-3.70', '-87.50', '-0.05 %'],
  ['2020.09.16 16:11:...', 'epz20', '92285666', 'sell', '1', '3405.00', '3412.75', '', '2020.09.16 16:48:02', '3401.25', '-3 401.25', '-3.70', '187.50', '0.11 %'],
  ['2020.09.16 18:15:...', 'epz20', '92313406', 'buy', '1', '3410.00', '3408.50', '', '2020.09.16 18:16:30', '3412.50', '3 412.50', '-3.70', '125.00', '0.07 %'],
  ['2020.09.16 18:16:...', 'epz20', '92313806', 'buy', '2', '3413.125', '3411.00', '', '2020.09.16 18:38:40', '3417.875', '6 835.75', '-7.40', '475.00', '0.14 %'],
];

function DealIcon({ sell }: { sell: boolean }) {
  const stroke = sell ? '#d0603c' : '#2b7fb5';
  return (
    <svg width="13" height="16" viewBox="0 0 13 16" className="shrink-0">
      <path d="M2.500 0.500h9l1 1v9l-4 5h-7l-1-1v-12z" fill={sell ? '#fde0d0' : '#d2ecfb'} stroke={stroke} />
      <path d="M8 15.500v-4l4.500-1z" fill={stroke} />
      <path d="M3.500 4.500h6M3.500 7.500h6M3.500 10.500h4" stroke={stroke} />
    </svg>
  );
}

function HistoryTable() {
  return (
    <table className="w-full table-fixed border-separate border-spacing-0 text-[11px] leading-[17px] whitespace-nowrap">
      <colgroup>
        {COLUMNS.map(([, width], i) => <col key={i} style={{ width }} />)}
      </colgroup>
      <thead>
        <tr>
          {COLUMNS.map(([name], i) => (
            <th key={i} scope="col" className={clsx('h-6 border-r border-[#e0e0e0] p-0 font-normal', i === 0 ? 'pl-1.5 text-left' : 'pr-[5px] text-right')}>
              {i === 1 ? (
                <span className="flex items-center justify-end gap-3.5 pr-0.5">
                  {name}
                  <svg width="8" height="5" viewBox="0 0 8 5"><path d="M0 5l4-5 4 5z" fill="#444" /></svg>
                </span>
              ) : (
                name
              )}
            </th>
          ))}
        </tr>
      </thead>
      <tbody>
        {DEALS.map((deal, row) => (
          <tr key={deal[2]} className={row % 2 ? 'bg-[#ebebeb]' : 'bg-white'}>
            {deal.map((value, i) => (
              <td
                key={i}
                className={clsx(
                  'h-5 border-r border-b border-[#c4c4c4] p-0 pr-[3px] text-right',
                  i === 6 && value === '3404.00' && 'bg-[#ff9f9f]',
                  i === 7 && value === '3396.25' && 'bg-[#62f062]',
                  i > 11 && (value.startsWith('-') ? 'text-[#e00a14]' : 'text-[#1a12d2]')
                )}
              >
                {i === 0 ? (
                  <span className="flex items-center gap-1.5 pl-0.5">
                    <DealIcon sell={deal[3] === 'sell'} />
                    {value}
                  </span>
                ) : (
                  value
                )}
              </td>
            ))}
          </tr>
        ))}
      </tbody>
      <tfoot>
        <tr className="bg-[#0078d7] font-bold text-white">
          <td colSpan={10} className="h-5 border-r border-[#7fb9ea] p-0">
            <span className="flex items-center gap-1.5 pl-0.5 whitespace-pre">
              <svg width="13" height="13" viewBox="0 0 13 13" fill="none" stroke="#06264a" strokeWidth="1.400">
                <circle cx="6.500" cy="6.500" r="5.500" />
                <path d="M6.500 3.500v6M3.500 6.500h6" />
              </svg>
              {'Прибыль: 1 448.20  Кредит: 0.00  Депозит: 0.00  Снятие: 0.00  Баланс: 1 448.20'}
            </span>
          </td>
          <td className="border-r border-[#7fb9ea]" />
          <td className="border-r border-[#7fb9ea] p-0 pr-[3px] text-right">-51.80</td>
          <td className="border-r border-[#7fb9ea] p-0 pr-[3px] text-right">1 500.00</td>
          <td />
        </tr>
      </tfoot>
    </table>
  );
}

const TOOLBOX_TABS: { name: string; count?: number }[] = [
  { name: 'Торговля' }, { name: 'Активы' }, { name: 'История' }, { name: 'Новости' }, { name: 'Почта', count: 7 },
  { name: 'Календарь' }, { name: 'Компания' }, { name: 'Маркет' }, { name: 'Алерты' }, { name: 'Сигналы' },
  { name: 'Статьи', count: 1 }, { name: 'Библиотека' }, { name: 'VPS' }, { name: 'Эксперты' }, { name: 'Журнал' },
];

function ToolboxTabs() {
  return (
    <nav className="flex h-[23px] items-start border-t border-black bg-[#f0f0f0] pl-0.5 text-[11px] text-[#6f6f6f]">
      {TOOLBOX_TABS.map(({ name, count }, i) => {
        if (name === 'История') {
          return (
            <button key={name} type="button" className="h-5 border-r-2 border-b-2 border-l border-black bg-white px-2.5 leading-[18px] text-black">
              {name}
            </button>
          );
        }
        const divided = i !== 1 && i !== TOOLBOX_TABS.length - 1;
        return (
          <React.Fragment key={name}>
            <button type="button" className="flex px-2.5 leading-5">
              {name}
              {count && <span className="ml-0.5 pt-1 text-[9px] font-bold text-[#e0202c]">{count}</span>}
            </button>
            {divided && <span className="mt-1 h-3.5 w-px bg-[#6f6f6f]" />}
          </React.Fragment>
        );
      })}
      <button type="button" className="mr-4 ml-auto leading-5 text-black">Тестер стратегий</button>
    </nav>
  );
}

const MENU = ['Файл', 'Вид', 'Вставка', 'Графики', 'Сервис', 'Окно', 'Справка'];

export default function App() {
  return (
    <div className="flex h-screen min-h-[640px] flex-col overflow-hidden border-t-[3px] border-white bg-[#f0f0f0] text-black" style={{ fontFamily: SANS }}>
      <nav className="flex h-[21px] shrink-0 items-center gap-[23px] border-b border-[#a0a0a0] pl-3 text-[11px]">
        {MENU.map(item => <button key={item} type="button">{item}</button>)}
      </nav>
      <TopToolbar />
      <ObjectsToolbar />

      <main className="grid min-h-0 flex-1 grid-cols-[448fr_287fr_628fr] grid-rows-[minmax(0,1fr)] border-t-2 border-[#6a6a6a] pr-0.5">
        <ChartWindow title="EPZ20,M10" className="border-l" chartClass="bg-white" origin={9}>
          <ChartM10 />
        </ChartWindow>
        <ChartWindow title="EPZ20,M1" chartClass="bg-white" origin={456}>
          <ChartSeconds />
        </ChartWindow>
        <ChartWindow title="EPZ20,M1" active chartClass="bg-[#c0c0c0]" origin={743}>
          <ChartClusters />
        </ChartWindow>
      </main>

      <div className="mt-0.5 flex h-5 shrink-0 items-start border-t border-black pl-1 text-[11px] text-[#7a7a7a]">
        <button type="button" className="h-[19px] border-r-2 border-b-2 border-l border-black bg-white px-[11px] leading-[17px] text-black">EPZ20,M1</button>
        <button type="button" className="px-3 leading-[18px]">EPZ20,M10</button>
        <span className="mt-1 h-3 w-px bg-[#7a7a7a]" />
        <button type="button" className="px-3 leading-[18px]">EPZ20,M1</button>
        <div className="mt-0.5 mr-1.5 ml-auto flex gap-1.5">
          <button type="button" aria-label="Назад" className="flex h-4 w-4 items-center justify-center">
            <svg width="4" height="6"><path d="M4 0v6L0 3z" fill="#808080" /></svg>
          </button>
          <button type="button" aria-label="Вперед" className="flex h-4 w-4 items-center justify-center">
            <svg width="4" height="6"><path d="M0 0v6l4-3z" fill="#808080" /></svg>
          </button>
        </div>
      </div>

      <section className="flex shrink-0 border-t border-white pt-[3px] pr-0.5 pb-1">
        <aside className="flex w-[15px] shrink-0 flex-col items-center">
          <button type="button" aria-label="Закрыть" className="flex h-3.5 items-center">
            <svg width="6" height="6"><path d="M0.500 0.500l5 5M5.500 0.500l-5 5" stroke="#000" strokeWidth="1.500" /></svg>
          </button>
          <div className="flex w-[13px] flex-1 items-center justify-start bg-gradient-to-b from-[#bcd3ee] to-[#9ab2d0] text-[11px] leading-[13px] [writing-mode:sideways-lr]">
            Инструменты
          </div>
        </aside>
        <div className="min-w-0 flex-1 border-t border-l border-[#a0a0a0] bg-white">
          <HistoryTable />
          <div className="h-[7px]" />
          <ToolboxTabs />
        </div>
      </section>
    </div>
  );
}
